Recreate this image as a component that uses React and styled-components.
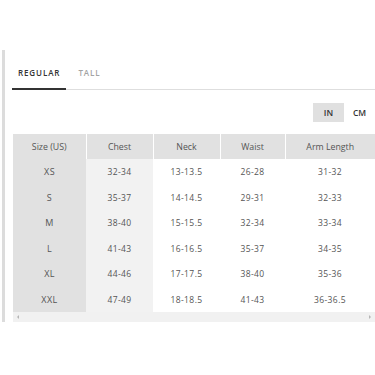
import React from 'react'
import styled, { createGlobalStyle } from 'styled-components'

const GlobalStyle = createGlobalStyle`
	html, body {
		margin: 0;
		padding: 0;
		background: #fff;
		font-family: 'Open Sans', 'Liberation Sans', sans-serif;
	}
`

const Page = styled('div')`
	display: flex;
	padding-top: 50px;
	width: 375px;
	height: 375px;
	box-sizing: border-box;
	align-items: flex-start;
`

const Rail = styled('div')`
	width: 3px;
	height: 272px;
	margin-left: 2px;
	background: #dcdcdc;
`

const Content = styled('div')`
	flex: 1;
	margin-left: 7px;
	display: flex;
	flex-direction: column;
`

const TabBar = styled('div')`
	display: flex;
	gap: 6px;
	border-bottom: 1px solid #dedede;
`

const Tab = styled('div')`
	padding: 18px 6px 10px 6px;
	margin-bottom: -1px;
	line-height: 10px;
	font-size: 8px;
	font-weight: 600;
	letter-spacing: 0.9px;
	color: ${p => (p.active ? '#333' : '#a3a3a3')};
	border-bottom: 2px solid ${p => (p.active ? '#333' : 'transparent')};
`

const UnitRow = styled('div')`
	display: flex;
	justify-content: flex-end;
	margin-top: 13px;
`

const Unit = styled('div')`
	width: 31px;
	height: 19px;
	display: flex;
	align-items: center;
	justify-content: center;
	font-size: 8.5px;
	font-weight: 600;
	color: #333;
	background: ${p => (p.active ? '#e0e0e0' : '#fff')};
`

const Table = styled('table')`
	margin: 12px 0 0 1px;
	border-collapse: collapse;
	table-layout: fixed;
	width: 362px;
	color: #555;
`

const Head = styled('th')`
	height: 25px;
	padding: 0;
	font-size: 8.8px;
	font-weight: 400;
	background: #e1e1e1;
	border-left: 1px solid #fff;
	&:first-child {
		border-left: none;
	}
`

const Cell = styled('td')`
	height: 25.5px;
	padding: 0;
	text-align: center;
	letter-spacing: 0.4px;
	font-size: ${p => (p.size ? '9px' : '8.5px')};
	background: ${p => p.shade};
`

const ScrollTrack = styled('div')`
	margin-left: 1px;
	height: 10px;
	background: #f1f1f1;
	display: flex;
	align-items: center;
	justify-content: space-between;
	padding: 0 4px;
`

const Arrow = styled('span')`
	width: 0;
	height: 0;
	border-top: 2px solid transparent;
	border-bottom: 2px solid transparent;
	${p => (p.dir === 'left' ? 'border-right: 2px solid #b5b5b5;' : 'border-left: 2px solid #b5b5b5;')}
`

const columns = [
	{ label: 'Size (US)', width: 73, shade: '#e1e1e1' },
	{ label: 'Chest', width: 67, shade: '#f2f2f2' },
	{ label: 'Neck', width: 67, shade: '#fff' },
	{ label: 'Waist', width: 65, shade: '#fff' },
	{ label: 'Arm Length', width: 90, shade: '#fff' },
]

const rows = [
	['XS', '32-34', '13-13.5', '26-28', '31-32'],
	['S', '35-37', '14-14.5', '29-31', '32-33'],
	['M', '38-40', '15-15.5', '32-34', '33-34'],
	['L', '41-43', '16-16.5', '35-37', '34-35'],
	['XL', '44-46', '17-17.5', '38-40', '35-36'],
	['XXL', '47-49', '18-18.5', '41-43', '36-36.5'],
]

function App() {
	return (
		<Page>
			<GlobalStyle />
			<Rail />
			<Content>
				<TabBar>
					<Tab active>REGULAR</Tab>
					<Tab>TALL</Tab>
				</TabBar>
				<UnitRow>
					<Unit active>IN</Unit>
					<Unit>CM</Unit>
				</UnitRow>
				<Table>
					<colgroup>
						{columns.map(c => <col key={c.label} style={{ width: c.width }} />)}
					</colgroup>
					<thead>
						<tr>
							{columns.map(c => <Head key={c.label}>{c.label}</Head>)}
						</tr>
					</thead>
					<tbody>
						{rows.map(row => (
							<tr key={row[0]}>
								{row.map((val, i) => (
									<Cell key={i} size={i === 0} shade={columns[i].shade}>{val}</Cell>
								))}
							</tr>
						))}
					</tbody>
				</Table>
				<ScrollTrack>
					<Arrow dir='left' />
					<Arrow dir='right' />
				</ScrollTrack>
			</Content>
		</Page>
	)
}

export default App
